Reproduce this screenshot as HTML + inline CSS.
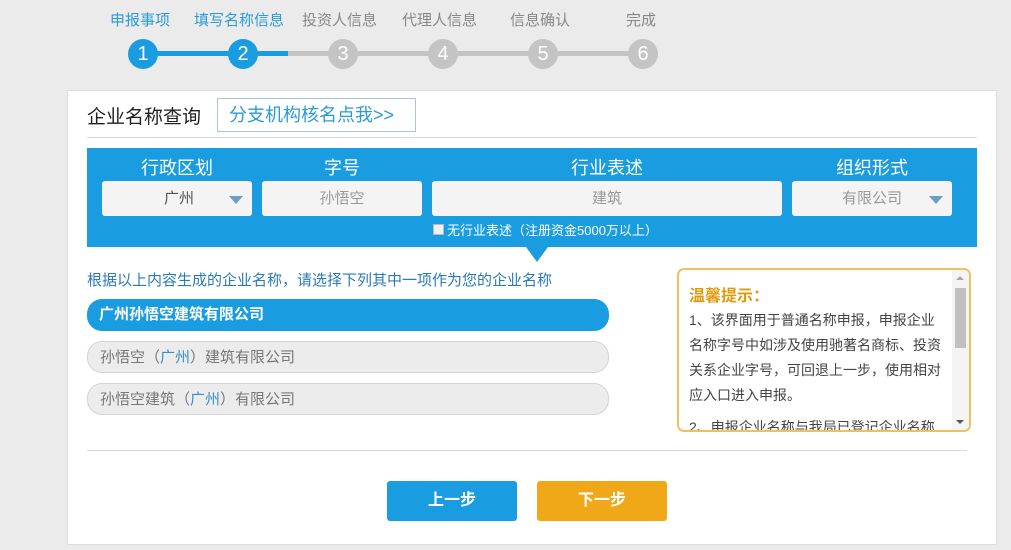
<!DOCTYPE html>
<html><head><meta charset="utf-8"><style>
*{margin:0;padding:0;box-sizing:border-box}
body{width:1011px;height:550px;background:#ebebeb;font-family:"Liberation Sans","Noto Sans CJK SC",sans-serif;position:relative;overflow:hidden}
.a{position:absolute}
.lbl{font-size:15px;color:#888;top:9px;white-space:nowrap}
.c{width:30px;height:30px;border-radius:50%;background:#c4c4c4;color:#fff;font-size:20px;text-align:center;line-height:30px;top:39px}
.b{background:#1a9de0}
.panel{left:67px;top:90px;width:930px;height:455px;background:#fff;border:1px solid #ddd}
.in{top:181px;height:35px;background:#f4f4f4;border-radius:3px;color:#999;font-size:15px;line-height:35px;text-align:center}
.h{top:154px;color:#fff;font-size:18px;text-align:center}
.tri{width:0;height:0;border-left:11px solid transparent;border-right:11px solid transparent;border-top:15px solid #1a9de0}
.opt{left:87px;width:522px;height:32px;border-radius:15px;font-size:15px;line-height:31px;padding-left:12px}
.g{background:#ececec;border:1px solid #d4d4d4;color:#777}
.g span{color:#3a8fc8}
.dd{width:0;height:0;border-left:7px solid transparent;border-right:7px solid transparent;border-top:8px solid #6a9fc0}
</style></head><body>
<div class="a lbl" style="left:110px;color:#2a9ad8">申报事项</div>
<div class="a lbl" style="left:194px;color:#2a9ad8">填写名称信息</div>
<div class="a lbl" style="left:302px">投资人信息</div>
<div class="a lbl" style="left:402px">代理人信息</div>
<div class="a lbl" style="left:510px">信息确认</div>
<div class="a lbl" style="left:626px">完成</div>
<div class="a" style="left:143px;top:51px;width:500px;height:5px;background:#c4c4c4"></div>
<div class="a" style="left:143px;top:51px;width:145px;height:5px;background:#1a9de0"></div>
<div class="a c b" style="left:128px">1</div>
<div class="a c b" style="left:228px">2</div>
<div class="a c" style="left:328px">3</div>
<div class="a c" style="left:428px">4</div>
<div class="a c" style="left:528px">5</div>
<div class="a c" style="left:628px">6</div>

<div class="a panel"></div>
<div class="a" style="left:87px;top:102px;font-size:19px;color:#222">企业名称查询</div>
<div class="a" style="left:217px;top:98px;width:199px;height:34px;border:1px solid #a8c8d8;color:#2a9ad8;font-size:18px;line-height:32px;padding-left:11px">分支机构核名点我&gt;&gt;</div>
<div class="a" style="left:87px;top:137px;width:890px;height:1px;background:#d8d8d8"></div>

<div class="a" style="left:87px;top:148px;width:890px;height:99px;background:#1a9de0"></div>
<div class="a tri" style="left:526px;top:247px"></div>
<div class="a h" style="left:102px;width:150px">行政区划</div>
<div class="a h" style="left:262px;width:160px">字号</div>
<div class="a h" style="left:432px;width:350px">行业表述</div>
<div class="a h" style="left:792px;width:160px">组织形式</div>
<div class="a in" style="left:102px;width:150px;text-align:left;padding-left:62px;color:#555">广州</div>
<div class="a dd" style="left:229px;top:196px"></div>
<div class="a in" style="left:262px;width:160px">孙悟空</div>
<div class="a in" style="left:432px;width:350px">建筑</div>
<div class="a in" style="left:792px;width:160px;text-align:left;padding-left:50px">有限公司</div>
<div class="a dd" style="left:929px;top:196px"></div>
<div class="a" style="left:433px;top:224px;width:11px;height:11px;background:#f0f0f0;border:1px solid #bbb"></div>
<div class="a" style="left:447px;top:220px;color:#fff;font-size:13px">无行业表述（注册资金5000万以上）</div>

<div class="a" style="left:87px;top:269px;font-size:15px;color:#2a7ab8">根据以上内容生成的企业名称，请选择下列其中一项作为您的企业名称</div>
<div class="a opt" style="top:299px;background:#1a9de0;color:#fff;font-weight:bold">广州孙悟空建筑有限公司</div>
<div class="a opt g" style="top:341px">孙悟空（<span>广州</span>）建筑有限公司</div>
<div class="a opt g" style="top:383px">孙悟空建筑（<span>广州</span>）有限公司</div>

<div class="a" style="left:677px;top:268px;width:294px;height:164px;border:2px solid #f0c060;border-radius:7px;overflow:hidden;background:#fff">
 <div style="position:absolute;left:10px;top:12px;color:#e09a10;font-size:16px;font-weight:bold">温馨提示：</div>
 <div style="position:absolute;left:10px;top:38px;width:258px;font-size:14px;color:#444;line-height:25px">1、该界面用于普通名称申报，申报企业名称字号中如涉及使用驰著名商标、投资关系企业字号，可回退上一步，使用相对应入口进入申报。<div style="margin-top:7px">2、申报企业名称与我局已登记企业名称</div></div>
 <div style="position:absolute;right:0;top:0;width:17px;height:160px;background:#f4f4f4"></div>
 <div style="position:absolute;right:3px;top:18px;width:11px;height:60px;background:#c1c1c1"></div>
 <div style="position:absolute;right:5px;top:6px;border-left:4px solid transparent;border-right:4px solid transparent;border-bottom:4px solid #aaa"></div>
 <div style="position:absolute;right:5px;top:150px;border-left:4px solid transparent;border-right:4px solid transparent;border-top:4px solid #555"></div>
</div>

<div class="a" style="left:87px;top:450px;width:880px;height:1px;background:#d8d8d8"></div>
<div class="a" style="left:387px;top:481px;width:130px;height:40px;background:#1a9de0;border-radius:3px;color:#fff;font-weight:bold;font-size:16px;text-align:center;line-height:40px">上一步</div>
<div class="a" style="left:537px;top:481px;width:130px;height:40px;background:#f0a818;border-radius:3px;color:#fff;font-weight:bold;font-size:16px;text-align:center;line-height:40px">下一步</div>
</body></html>
